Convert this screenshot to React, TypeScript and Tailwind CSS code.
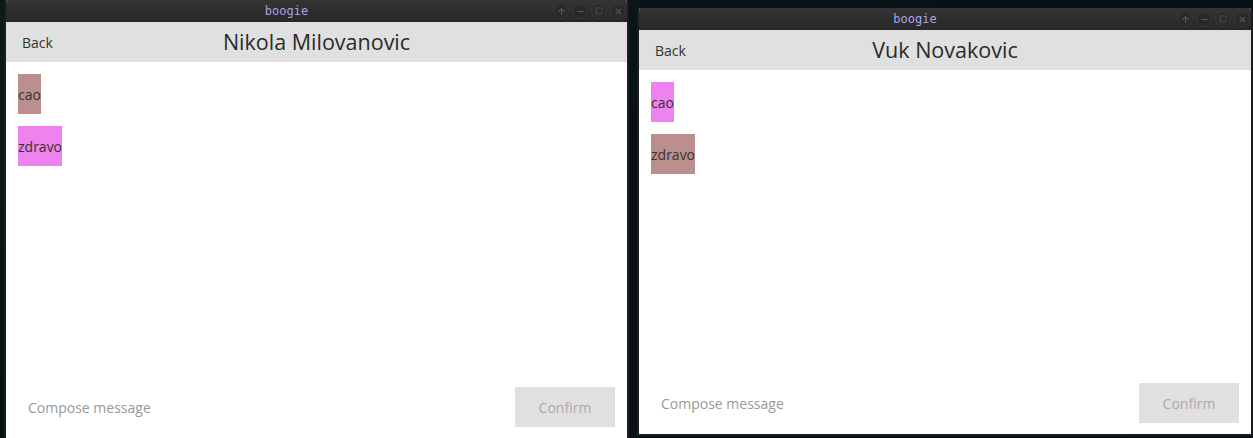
import { ArrowUp, Minus, Square, X } from "lucide-react";

interface message {
  id: number;
  text: string;
  mine: boolean;
}

interface windowProps {
  title: string;
  messages: message[];
  className: string;
}

const font = { fontFamily: '"Open Sans", "DejaVu Sans", sans-serif' };

const TitleButton = ({ children }: { children: React.ReactNode }) => (
  <div className="flex h-[16px] w-[16px] items-center justify-center rounded-full border border-[#3a3a3a] bg-[#2a2a2a] text-[#555]">
    {children}
  </div>
);

const ChatWindow = ({ title, messages, className }: windowProps) => {
  return (
    <div
      className={`absolute flex flex-col overflow-hidden rounded-t-[4px] border-2 border-t-0 border-[#1c1c1c] bg-white ${className}`}
      style={font}
    >
      {/* title bar */}
      <div className="relative flex h-[22px] shrink-0 items-center bg-gradient-to-b from-[#343434] to-[#272727]">
        <div className="flex-1 pr-[60px] text-center font-['DejaVu_Sans_Mono',monospace] text-[12px] text-[#a9a4e8]">
          boogie
        </div>
        <div className="absolute right-[1px] top-[3px] flex gap-[3px]">
          <TitleButton>
            <ArrowUp size={9} strokeWidth={3} />
          </TitleButton>
          <TitleButton>
            <Minus size={9} strokeWidth={3} />
          </TitleButton>
          <TitleButton>
            <Square size={8} strokeWidth={2.5} />
          </TitleButton>
          <TitleButton>
            <X size={9} strokeWidth={3} />
          </TitleButton>
        </div>
      </div>

      {/* header */}
      <div className="grid h-10 shrink-0 grid-cols-[1fr_auto_1fr] items-center bg-[#e0e0e0]">
        <span className="pl-4 text-[14px] text-[#333]">Back</span>
        <span className="text-[21.5px] text-[#2a2a2a]">{title}</span>
        <span></span>
      </div>

      {/* messages */}
      <div className="flex flex-1 flex-col items-start gap-3 p-3">
        {messages.map((m) => (
          <div
            key={m.id}
            className={`flex h-10 items-center text-[14px] text-[#333] ${
              m.mine ? "bg-[#bc8f8f]" : "bg-[#ee82ee]"
            }`}
          >
            {m.text}
          </div>
        ))}
      </div>

      {/* compose */}
      <div className="flex shrink-0 items-center px-3 pb-[11px]">
        <input
          className="h-10 flex-1 px-[10px] text-[14px] text-[#333] outline-none placeholder:text-[#999]"
          placeholder="Compose message"
          style={font}
        />
        <button className="h-10 w-[100px] bg-[#e0e0e0] text-[14px] text-[#aaa]">
          Confirm
        </button>
      </div>
    </div>
  );
};

export default function App() {
  return (
    <div className="relative h-[438px] w-[1253px] overflow-hidden bg-gradient-to-br from-[#0c1a1c] via-[#071012] to-[#0a1416]">
      <ChatWindow
        title="Nikola Milovanovic"
        className="left-[4px] top-0 h-[440px] w-[625px]"
        messages={[
          { id: 1, text: "cao", mine: true },
          { id: 2, text: "zdravo", mine: false },
        ]}
      />
      <ChatWindow
        title="Vuk Novakovic"
        className="left-[637px] top-[8px] h-[428px] w-[616px]"
        messages={[
          { id: 1, text: "cao", mine: false },
          { id: 2, text: "zdravo", mine: true },
        ]}
      />
    </div>
  );
}
